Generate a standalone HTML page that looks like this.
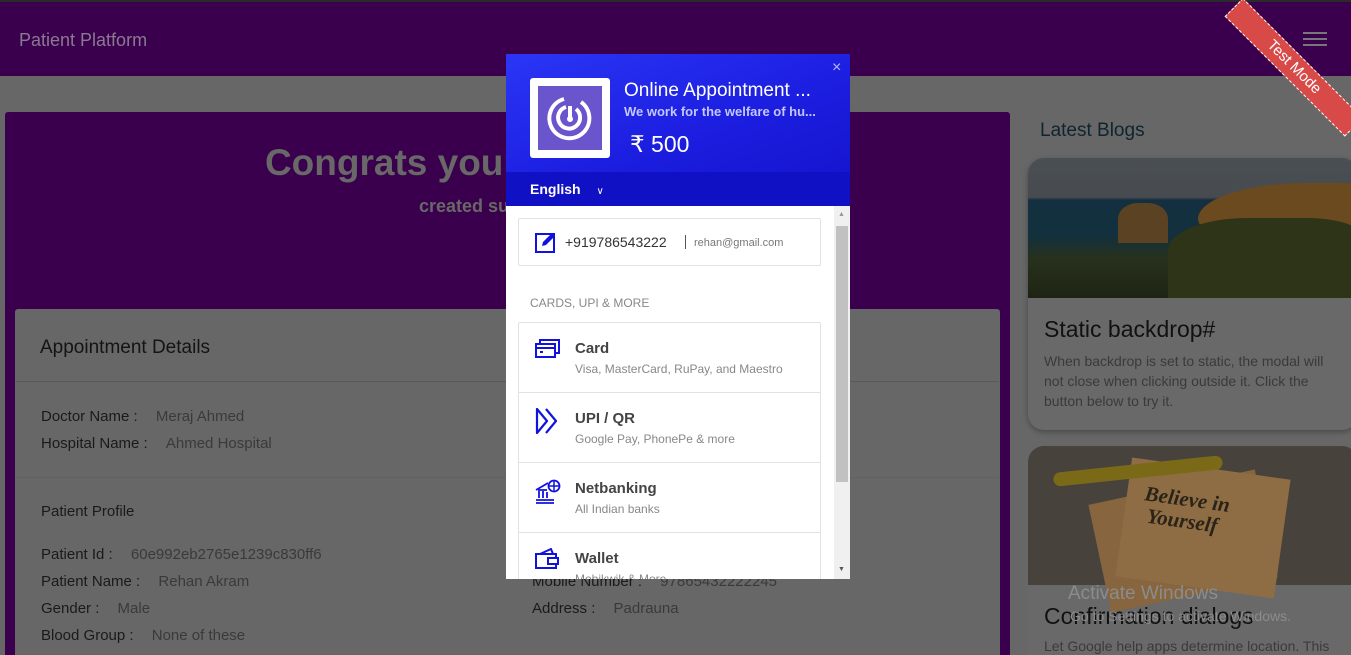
<!DOCTYPE html>
<html><head><meta charset="utf-8"><style>
*{box-sizing:border-box;margin:0;padding:0}
html,body{width:1351px;height:655px;overflow:hidden}
body{background:#676767;font-family:"Liberation Sans",sans-serif;position:relative}
.a{position:absolute}
.nav{left:0;top:0;width:1351px;height:76px;background:#3a004e;border-top:2px solid #2a2a2a}
.lbl{color:#1a1a1a;font-size:15px}
.val{color:#3a3a3a;font-size:15px}
</style></head><body>
<div class="a nav"></div>
<div class="a" style="left:19px;top:30px;color:#8a7a90;font-size:18px">Patient Platform</div>
<div class="a" style="left:1303px;top:32px;width:24px;height:2px;background:#777;box-shadow:0 6px 0 #777,0 12px 0 #777"></div>
<div class="a" style="width:170px;height:26px;background:#d84a47;transform:rotate(45deg);transform-origin:0 0;left:1243px;top:-2px;color:#fff;font-size:15px;text-align:center;line-height:24px;border:1px dashed #fff">Test Mode</div>

<div class="a" style="left:5px;top:112px;width:1005px;height:560px;background:#3a004e;border-radius:3px"></div>
<div class="a" style="left:5px;top:142px;width:1005px;text-align:center;color:#686868;font-size:37px;font-weight:bold">Congrats your appointment</div>
<div class="a" style="left:5px;top:196px;width:1005px;text-align:center;color:#686868;font-size:18px;font-weight:bold">created successfully</div>
<div class="a" style="left:15px;top:309px;width:985px;height:360px;background:#676767;border-radius:3px"></div>
<div class="a" style="left:16px;top:381px;width:983px;height:1px;background:#5a5a5a"></div>
<div class="a" style="left:40px;top:337px;font-size:19px;color:#141414">Appointment Details</div>
<div class="a lbl" style="left:41px;top:408px">Doctor Name : <span class="val" style="margin-left:14px">Meraj Ahmed</span></div>
<div class="a lbl" style="left:41px;top:435px">Hospital Name : <span class="val" style="margin-left:14px">Ahmed Hospital</span></div>
<div class="a" style="left:16px;top:477px;width:983px;height:1px;background:#616161"></div>
<div class="a lbl" style="left:41px;top:503px">Patient Profile</div>
<div class="a lbl" style="left:41px;top:546px">Patient Id : <span class="val" style="margin-left:14px">60e992eb2765e1239c830ff6</span></div>
<div class="a lbl" style="left:41px;top:573px">Patient Name : <span class="val" style="margin-left:14px">Rehan Akram</span></div>
<div class="a lbl" style="left:41px;top:600px">Gender : <span class="val" style="margin-left:14px">Male</span></div>
<div class="a lbl" style="left:41px;top:627px">Blood Group : <span class="val" style="margin-left:14px">None of these</span></div>
<div class="a lbl" style="left:532px;top:573px">Mobile Number : <span class="val" style="margin-left:14px">97865432222245</span></div>
<div class="a lbl" style="left:532px;top:600px">Address : <span class="val" style="margin-left:14px">Padrauna</span></div>

<div class="a" style="left:1040px;top:120px;font-size:19px;color:#0f2430">Latest Blogs</div>
<div class="a" style="left:1028px;top:158px;width:330px;height:272px;background:#696969;border-radius:16px;overflow:hidden;box-shadow:0 2px 6px rgba(0,0,0,.3)">
<div style="height:140px;background:linear-gradient(180deg,#4a4f54 0,#474b4f 28%,#143040 30%,#12303e 55%,#27311c 72%,#1e2414 100%);position:relative"><div class="a" style="left:170px;top:25px;width:180px;height:60px;background:#6a4a1e;border-radius:60% 20% 0 40%"></div><div class="a" style="left:140px;top:60px;width:200px;height:80px;background:#2e3418;border-radius:40% 30% 0 0"></div><div class="a" style="left:90px;top:45px;width:50px;height:40px;background:#5a4222;border-radius:40% 40% 0 0"></div></div>
<div style="padding:18px 16px;"><div style="font-size:23px;color:#111">Static backdrop#</div><div style="font-size:14px;color:#3a3a3a;line-height:20px;margin-top:8px">When backdrop is set to static, the modal will not close when clicking outside it. Click the button below to try it.</div></div></div>
<div class="a" style="left:1028px;top:446px;width:330px;height:230px;background:#696969;border-radius:16px;overflow:hidden">
<div style="height:139px;background:#47423c;position:relative"><div class="a" style="left:70px;top:40px;width:170px;height:110px;background:#86653f;transform:rotate(-12deg)"></div><div class="a" style="left:95px;top:22px;width:160px;height:120px;background:#8e6c44;transform:rotate(8deg)"></div><div class="a" style="left:25px;top:18px;width:170px;height:14px;background:#7a6a18;transform:rotate(-6deg);border-radius:7px"></div><div class="a" style="left:115px;top:42px;font-family:'Liberation Serif',serif;font-style:italic;font-weight:bold;font-size:21px;color:#2a2418;transform:rotate(8deg);line-height:22px">Believe in<br>&nbsp;Yourself</div></div>
<div style="padding:18px 16px"><div style="font-size:23px;color:#111">Confirmation dialogs</div><div style="font-size:14px;color:#3a3a3a;margin-top:8px">Let Google help apps determine location. This</div></div></div>
<div class="a" style="left:1068px;top:583px;color:#8c8c8c;font-size:19px">Activate Windows</div>
<div class="a" style="left:1070px;top:608px;color:#8c8c8c;font-size:14px">Go to Settings to activate Windows.</div>

<!-- modal -->
<div class="a" style="left:506px;top:54px;width:344px;height:525px;background:#fff;overflow:hidden">
<div class="a" style="left:0;top:0;width:344px;height:118px;background:linear-gradient(160deg,#2b36f5,#1c1ee0 60%,#1616d0)"></div>
<div class="a" style="left:0;top:118px;width:344px;height:34px;background:#1010c4"></div>
<div class="a" style="left:326px;top:5px;color:#b8bcff;font-size:16px">×</div>
<div class="a" style="left:24px;top:24px;width:80px;height:80px;background:#fff;border-radius:3px"></div>
<div class="a" style="left:32px;top:32px;width:64px;height:64px;background:#6a55cc"></div>
<svg class="a" style="left:32px;top:32px" width="64" height="64" viewBox="0 0 64 64"><path d="M43 16 A20 20 0 1 1 26 13" fill="none" stroke="#fff" stroke-width="4"/><path d="M38 23 A11 11 0 1 1 28 21" fill="none" stroke="#fff" stroke-width="4"/><path d="M32 20 V33" stroke="#fff" stroke-width="4"/><circle cx="32" cy="33" r="3" fill="#fff"/></svg>
<div class="a" style="left:118px;top:26px;color:#fff;font-size:19px">Online Appointment ...</div>
<div class="a" style="left:118px;top:50px;color:#c4c8ff;font-size:13px;font-weight:bold">We work for the welfare of hu...</div>
<div class="a" style="left:124px;top:77px;color:#fff;font-size:23px">₹ 500</div>
<div class="a" style="left:24px;top:127px;color:#fff;font-size:14px;font-weight:bold">English <span style="font-weight:normal;font-size:10px;margin-left:12px">∨</span></div>

<div class="a" style="left:12px;top:164px;width:303px;height:48px;border:1px solid #e2e2e2;border-radius:2px"></div>
<svg class="a" style="left:29px;top:177px" width="22" height="22" viewBox="0 0 22 22"><rect x="1" y="3" width="18" height="18" fill="none" stroke="#1212e0" stroke-width="2"/><path d="M7 15 L8 11 L17 2 L20 5 L11 14 Z" fill="#1212e0"/></svg>
<div class="a" style="left:59px;top:180px;font-size:14px;color:#333">+919786543222</div>
<div class="a" style="left:179px;top:181px;width:1px;height:14px;background:#555"></div>
<div class="a" style="left:188px;top:183px;font-size:11px;color:#777">rehan@gmail.com</div>
<div class="a" style="left:24px;top:242px;font-size:12px;color:#888">CARDS, UPI &amp; MORE</div>

<div class="a" style="left:12px;top:268px;width:303px;height:280px;border:1px solid #e2e2e2;border-radius:2px"></div>
<div class="a" style="left:13px;top:338px;width:301px;height:1px;background:#e2e2e2"></div>
<div class="a" style="left:13px;top:408px;width:301px;height:1px;background:#e2e2e2"></div>
<div class="a" style="left:13px;top:478px;width:301px;height:1px;background:#e2e2e2"></div>
<svg class="a" style="left:29px;top:285px" width="26" height="26" viewBox="0 0 26 26"><rect x="5" y="1" width="19" height="13" fill="none" stroke="#1212e0" stroke-width="2"/><rect x="1" y="5" width="19" height="13" fill="#fff" stroke="#1212e0" stroke-width="2"/><path d="M1 9 H20" stroke="#1212e0" stroke-width="2"/><path d="M5 13 H8" stroke="#1212e0" stroke-width="2"/></svg>
<div class="a" style="left:69px;top:286px;font-size:15px;font-weight:bold;color:#444">Card</div>
<div class="a" style="left:69px;top:308px;font-size:12px;color:#888">Visa, MasterCard, RuPay, and Maestro</div>
<svg class="a" style="left:29px;top:354px" width="26" height="26" viewBox="0 0 26 26"><path d="M2 1 L12 13 L2 25 Z M11 1 L21 13 L11 25" fill="none" stroke="#1212e0" stroke-width="2.2" stroke-linejoin="round"/></svg>
<div class="a" style="left:69px;top:356px;font-size:15px;font-weight:bold;color:#444">UPI / QR</div>
<div class="a" style="left:69px;top:378px;font-size:12px;color:#888">Google Pay, PhonePe &amp; more</div>
<svg class="a" style="left:29px;top:424px" width="26" height="26" viewBox="0 0 26 26"><path d="M1 12 L13 5 M3 12 H12 M4 13 V20 M8 13 V20 M12 14 V20 M1 22 H19 M1 25 H19" stroke="#1212e0" stroke-width="1.8" fill="none"/><circle cx="19" cy="8" r="5.5" fill="#fff" stroke="#1212e0" stroke-width="1.8"/><path d="M13.5 8 H24.5 M19 2.5 V13.5" stroke="#1212e0" stroke-width="1.5"/></svg>
<div class="a" style="left:69px;top:426px;font-size:15px;font-weight:bold;color:#444">Netbanking</div>
<div class="a" style="left:69px;top:448px;font-size:12px;color:#888">All Indian banks</div>
<svg class="a" style="left:29px;top:494px" width="26" height="26" viewBox="0 0 26 26"><path d="M5 6 L16 1 L18 6" fill="none" stroke="#1212e0" stroke-width="2"/><rect x="1" y="6" width="20" height="14" fill="none" stroke="#1212e0" stroke-width="2"/><rect x="13" y="10" width="10" height="6" fill="#fff" stroke="#1212e0" stroke-width="2"/></svg>
<div class="a" style="left:69px;top:496px;font-size:15px;font-weight:bold;color:#444">Wallet</div>
<div class="a" style="left:69px;top:518px;font-size:12px;color:#888">Mobikwik &amp; More</div>

<div class="a" style="left:328px;top:152px;width:16px;height:373px;background:#f0f0f0"></div>
<div class="a" style="left:330px;top:172px;width:12px;height:256px;background:#c1c1c1"></div>
<div class="a" style="left:332px;top:157px;font-size:7px;color:#999">▲</div>
<div class="a" style="left:332px;top:512px;font-size:7px;color:#555">▼</div>
</div>
</body></html>
